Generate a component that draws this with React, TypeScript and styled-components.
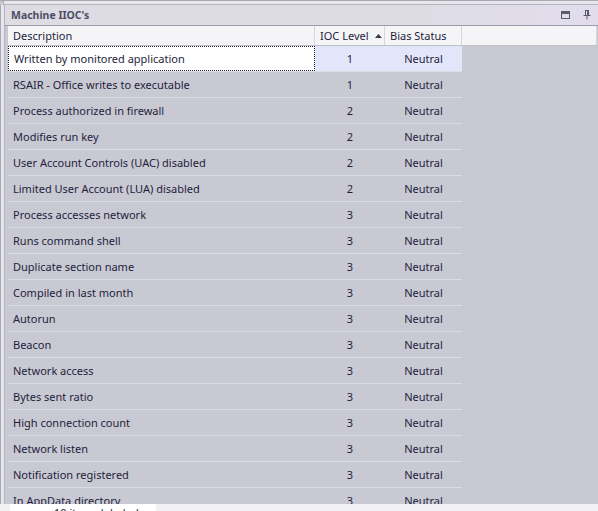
import React from "react";
import styled, { createGlobalStyle } from "styled-components";

const Global = createGlobalStyle`
  html, body { margin: 0; padding: 0; }
  body {
    width: 598px; height: 511px; overflow: hidden;
    background: #c9c9d3;
    font-family: "Noto Sans", "Open Sans", sans-serif;
  }
`;

const Frame = styled.div`
  width: 598px; height: 511px; overflow: hidden;
  display: flex; flex-direction: column;
  border-top: 1px solid #a9a9b3;
  box-sizing: border-box;
`;

const TopStrip = styled.div`
  height: 3px;
  flex: none;
  background: #e6e6ec;
  border-bottom: 1px solid #b4b4be;
  margin-left: 3px;
  border-left: 1px solid #b4b4be;
`;

const Body = styled.div`
  flex: 1;
  display: flex;
  min-height: 0;
`;

const LeftEdge = styled.div`
  width: 3px;
  flex: none;
  background: #e6e6ec;
  border-left: 1px solid #a9a9b3;
  border-right: 1px solid #b4b4be;
`;

const Pane = styled.div`
  flex: 1;
  display: flex;
  flex-direction: column;
  min-width: 0;
`;

const TitleBar = styled.div`
  height: 20px;
  flex: none;
  display: flex;
  align-items: center;
  padding-left: 6px;
  background: linear-gradient(to right, #dcdce2 0%, #dcdce2 60%, #e2ddec 100%);
  border-bottom: 1px solid #9c9cac;
`;

const Title = styled.div`
  flex: 1;
  font-size: 10.5px;
  font-weight: bold;
  color: #4d4d66;
`;

const TitleBtn = styled.div`
  width: 22px;
  height: 20px;
  display: flex;
  align-items: center;
  justify-content: center;
`;

const GridArea = styled.div`
  flex: 1;
  display: flex;
  flex-direction: column;
  padding-left: 3px;
  min-height: 0;
  overflow: hidden;
`;

const Row = styled.div<{ $header?: boolean }>`
  display: grid;
  grid-template-columns: 307px 70px 77px;
  height: ${(p) => (p.$header ? "20px" : "26px")};
  flex: none;
  box-sizing: border-box;
  ${(p) =>
    p.$header
      ? `border-bottom: 1px solid #c0c0c8; width: 589px; background: #f5f5f7; grid-template-columns: 307px 70px 77px 1fr;`
      : `border-bottom: 1px solid #dcdce4; width: 454px;`}
`;

const HeadCell = styled.div`
  display: flex;
  align-items: center;
  padding-left: 5px;
  font-size: 11px;
  color: #1e1e3c;
  border-right: 1px solid #d6d6dc;
  gap: 6px;
`;

const Cell = styled.div<{ $center?: boolean; $focus?: boolean; $sel?: boolean }>`
  display: flex;
  align-items: center;
  justify-content: ${(p) => (p.$center ? "center" : "flex-start")};
  padding-left: ${(p) => (p.$center ? "0" : "5px")};
  font-size: 11px;
  color: #1e1e3c;
  white-space: nowrap;
  box-sizing: border-box;
  background: ${(p) => (p.$focus ? "#ffffff" : p.$sel ? "#e3e5fa" : "transparent")};
  border: ${(p) => (p.$focus ? "1px dotted #202030" : "none")};
`;

const Bottom = styled.div`
  height: 7px;
  flex: none;
  display: flex;
  background: #f2f2f5;
`;

const BottomLeft = styled.div`
  width: 146px;
  margin-left: 10px;
  background: #ffffff;
  overflow: hidden;
  font-size: 11px;
  color: #1e1e3c;
  line-height: 18px;
  padding-left: 44px;
  box-sizing: border-box;
  white-space: nowrap;
`;

const rows: [string, number][] = [
  ["Written by monitored application", 1],
  ["RSAIR - Office writes to executable", 1],
  ["Process authorized in firewall", 2],
  ["Modifies run key", 2],
  ["User Account Controls (UAC) disabled", 2],
  ["Limited User Account (LUA) disabled", 2],
  ["Process accesses network", 3],
  ["Runs command shell", 3],
  ["Duplicate section name", 3],
  ["Compiled in last month", 3],
  ["Autorun", 3],
  ["Beacon", 3],
  ["Network access", 3],
  ["Bytes sent ratio", 3],
  ["High connection count", 3],
  ["Network listen", 3],
  ["Notification registered", 3],
  ["In AppData directory", 3],
];

export default function App() {
  return (
    <>
      <Global />
      <Frame>
        <TopStrip />
        <Body>
          <LeftEdge />
          <Pane>
            <TitleBar>
              <Title>Machine IIOC's</Title>
              <TitleBtn>
                <svg width="9" height="8" viewBox="0 0 9 8">
                  <rect x="0.5" y="0.5" width="8" height="7" fill="none" stroke="#5a5a70" />
                  <rect x="1" y="1" width="7" height="2" fill="#5a5a70" />
                </svg>
              </TitleBtn>
              <TitleBtn>
                <svg width="8" height="10" viewBox="0 0 8 10">
                  <path d="M2 0.5h4M2.5 0.5v5M5.5 0.5v5M0.5 5.5h7M4 5.5v4" stroke="#5a5a70" fill="none" />
                  <rect x="4" y="1" width="1.5" height="4.5" fill="#5a5a70" />
                </svg>
              </TitleBtn>
            </TitleBar>
            <GridArea>
              <Row $header>
                <HeadCell>Description</HeadCell>
                <HeadCell>
                  IOC Level
                  <svg width="7" height="4" viewBox="0 0 7 4">
                    <path d="M0 4L3.5 0L7 4Z" fill="#3a3a4a" />
                  </svg>
                </HeadCell>
                <HeadCell>Bias Status</HeadCell>
                <HeadCell />
              </Row>
              {rows.map(([d, l], i) => (
                <Row key={i}>
                  <Cell $focus={i === 0}>{d}</Cell>
                  <Cell $center $sel={i === 0}>{l}</Cell>
                  <Cell $center $sel={i === 0}>Neutral</Cell>
                </Row>
              ))}
            </GridArea>
          </Pane>
        </Body>
        <Bottom>
          <BottomLeft>10 items labeled</BottomLeft>
        </Bottom>
      </Frame>
    </>
  );
}
